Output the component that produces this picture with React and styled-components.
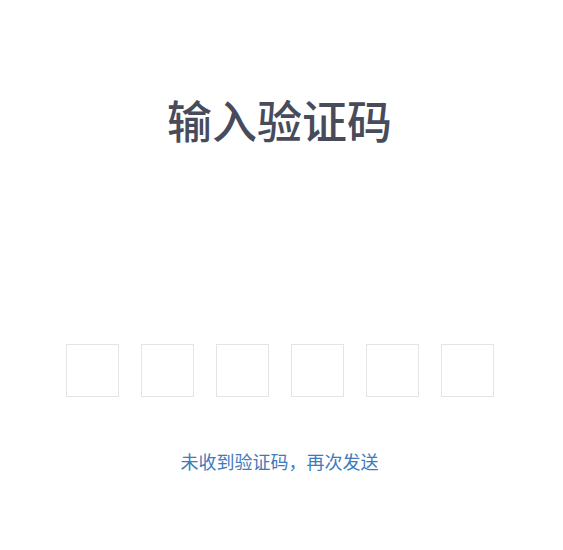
import React from "react";
import styled, { createGlobalStyle } from "styled-components";

const GlobalStyle = createGlobalStyle`
  body {
    margin: 0;
    background: #fff;
    font-family: "Noto Sans CJK SC", "Noto Sans", sans-serif;
  }
`;

const Page = styled.div`
  width: 563px;
  height: 550px;
  display: flex;
  flex-direction: column;
  align-items: center;
  padding-top: 97px;
  box-sizing: border-box;
`;

const Title = styled.h1`
  margin: 0;
  padding-left: 0;
  font-size: 45px;
  line-height: 45px;
  font-weight: 500;
  color: #474b5b;
  letter-spacing: 0;
  transform: translateX(-2px);
`;

const CodeRow = styled.div`
  margin-top: 202px;
  display: flex;
  gap: 22px;
  transform: translateX(-2px);
`;

const CodeBox = styled.input`
  width: 53px;
  height: 53px;
  box-sizing: border-box;
  border: 1px solid #e4e4e4;
  border-radius: 0;
  background: #fff;
  outline: none;
  text-align: center;
  font-size: 24px;
  font-family: inherit;
  color: #333;
  padding: 0;
`;

const Resend = styled.a`
  margin-top: 54px;
  font-size: 18px;
  line-height: 20px;
  color: #3d7bbd;
  text-decoration: none;
  cursor: pointer;
  transform: translateX(-2px);
`;

export default function App() {
  return (
    <>
      <GlobalStyle />
      <Page>
        <Title>输入验证码</Title>
        <CodeRow>
          {[0, 1, 2, 3, 4, 5].map((i) => (
            <CodeBox key={i} maxLength={1} />
          ))}
        </CodeRow>
        <Resend>未收到验证码，再次发送</Resend>
      </Page>
    </>
  );
}
